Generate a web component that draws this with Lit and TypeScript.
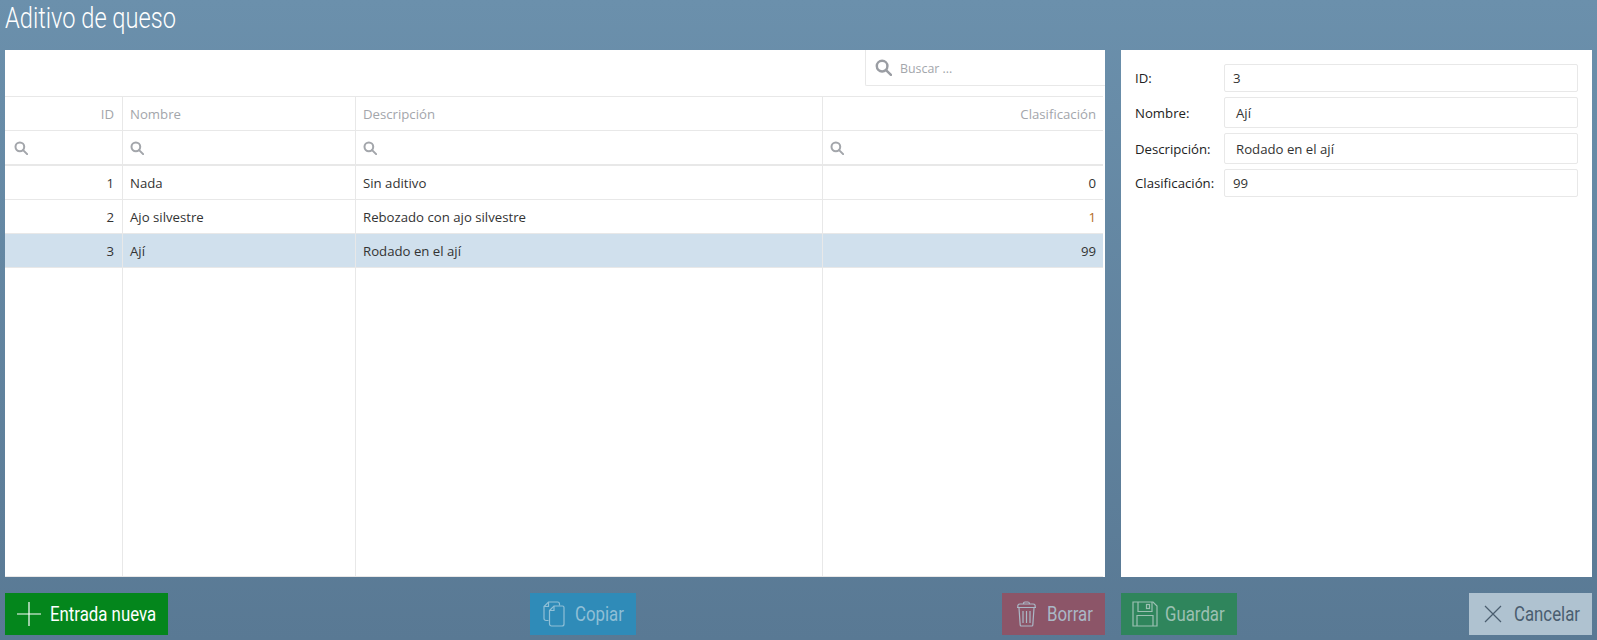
import { LitElement, html, css } from "lit";
import { customElement } from "lit/decorators.js";

const mag = (s: number) => html`<svg class="mag" width=${s} height=${s} viewBox="0 0 16 16" fill="none" stroke="currentColor" stroke-width="2.3"><circle cx="6.7" cy="6.7" r="5"/><path d="M10.400 10.400 15 15" stroke-linecap="round"/></svg>`;

const rows = [
  ["1", "Nada", "Sin aditivo", "0"],
  ["2", "Ajo silvestre", "Rebozado con ajo silvestre", "1"],
  ["3", "Ají", "Rodado en el ají", "99"],
];

@customElement("app-root")
export class AppRoot extends LitElement {
  static styles = css`
    :host { display: block; width: 1597px; height: 640px; overflow: hidden; background: linear-gradient(180deg, #6b90ac 0%, #597994 100%); font-family: "Open Sans", "Noto Sans", sans-serif; font-size: 13.2px; color: #333; }
    .page { display: flex; flex-direction: column; height: 640px; padding: 0 5px; box-sizing: border-box; }
    .title { height: 50px; flex: none; font-family: Roboto, sans-serif; font-weight: 300; font-size: 28.800px; line-height: 37px; color: #fff; transform: scaleX(.82); transform-origin: 0 0; white-space: nowrap; }
    .main { display: flex; gap: 16px; height: 527px; flex: none; }
    .left { width: 1100px; background: #fff; display: flex; flex-direction: column; flex: none; }
    .toolbar { height: 46px; flex: none; display: flex; justify-content: flex-end; align-items: flex-start; }
    .search { width: 240px; height: 36px; box-sizing: border-box; border: 1px solid #e8e8e8; border-top: none; border-right: none; display: flex; align-items: center; gap: 8px; padding-left: 9px; border-radius: 0 0 0 2px; }
    .search .mag { color: #9a9da3; }
    .search span { color: #a3a6ab; font-size: 12.400px; padding-top: 2px; }
    .grid { flex: 1; display: grid; grid-template-columns: 118px 233px 467px 280px; grid-template-rows: 34px 35px 34px 34px 34px 1fr; border-top: 1px solid #e8e8e8; border-bottom: 1px solid #e8e8e8; margin-right: 2px; }
    .cell { box-sizing: border-box; border-right: 1px solid #e8e8e8; border-bottom: 1px solid #e8e8e8; padding: 0 8px 0 7px; display: flex; align-items: center; white-space: nowrap; overflow: hidden; }
    .cell.last { border-right: none; }
    .num { justify-content: flex-end; }
    .cell.num.last { padding-right: 7px; }
    .head { color: #a3a6ab; }
    .filter { color: #a3a6ab; border-bottom-width: 2px; }
    .filter.first { padding-left: 9px; }
    .sel { background: #d0e0ed; border-bottom-color: #e8e8e8; }
    .orange { color: #b36b1d; }
    .blank { border-bottom: none; }
    .right { flex: 1; background: #fff; padding: 14px 14px 0 14px; box-sizing: border-box; display: grid; grid-template-columns: 89px 1fr; grid-template-rows: 28px 31px 31px 28px; row-gap: 5px; align-content: start; align-items: center; }
    .right .field { box-sizing: border-box; height: 100%; border: 1px solid #e8e8e8; border-radius: 2px; display: flex; align-items: center; padding-left: 8px; }
    .field.pad { padding-left: 11px; }
    .lab { color: #222; }
    .bottom { display: flex; margin-top: 16px; height: 42px; flex: none; }
    .btn { height: 42px; box-sizing: border-box; display: flex; align-items: center; font-family: Roboto, sans-serif; font-size: 20px; white-space: nowrap; }
    .btn svg { flex: none; }
    .btn b { font-weight: 400; display: inline-block; transform: scaleX(.84); transform-origin: 0 50%; }
    .bl { width: 1100px; display: flex; justify-content: space-between; flex: none; }
    .br { flex: 1; margin-left: 16px; display: flex; justify-content: space-between; }
    .new { width: 163px; background: #04861c; color: #fff; padding-left: 11px; gap: 8px; }
    .copy { width: 106px; margin-right: 4px; background: #2f8bb8; color: #8fbfd6; padding-left: 13px; gap: 10px; }
    .del { width: 103px; background: #8c5568; color: #aab8c6; padding-left: 14px; gap: 10px; }
    .save { width: 116px; background: #2f855c; color: #9cc0b2; padding-left: 11px; gap: 7px; }
    .cancel { width: 123px; background: #afc2d0; color: #4a5d6f; padding-left: 15px; gap: 12px; }
  `;

  render() {
    return html`<div class="page">
      <div class="title">Aditivo de queso</div>
      <div class="main">
        <div class="left">
          <div class="toolbar"><div class="search">${mag(17)}<span>Buscar ...</span></div></div>
          <div class="grid">
            <div class="cell head num">ID</div><div class="cell head">Nombre</div><div class="cell head">Descripción</div><div class="cell head num last">Clasificación</div>
            ${[0, 1, 2, 3].map((i) => html`<div class="cell filter ${i === 3 ? "last" : ""} ${i === 0 ? "first" : ""}">${mag(14)}</div>`)}
            ${rows.map((r, i) => {
              const s = i === 2 ? "sel" : "";
              return html`<div class="cell num ${s}">${r[0]}</div><div class="cell ${s}">${r[1]}</div><div class="cell ${s}">${r[2]}</div><div class="cell num last ${s} ${i === 1 ? "orange" : ""}">${r[3]}</div>`;
            })}
            <div class="cell blank"></div><div class="cell blank"></div><div class="cell blank"></div><div class="cell blank last"></div>
          </div>
        </div>
        <div class="right">
          <div class="lab">ID:</div><div class="field">3</div>
          <div class="lab">Nombre:</div><div class="field pad">Ají</div>
          <div class="lab">Descripción:</div><div class="field pad">Rodado en el ají</div>
          <div class="lab">Clasificación:</div><div class="field">99</div>
        </div>
      </div>
      <div class="bottom">
        <div class="bl">
          <div class="btn new"><svg width="26" height="26" viewBox="0 0 26 26" stroke="currentColor" stroke-width="1.2" fill="none"><path d="M13 1v24M1 13h24"/></svg><b>Entrada nueva</b></div>
          <div class="btn copy"><svg width="22" height="26" viewBox="0 0 22 26" fill="none" stroke="currentColor" stroke-width="1.2"><path d="M5.500 19.500H3c-1.200 0-2-.8-2-2V5.500L5.500 1H14.500c1.200 0 2 .8 2 2v1.500"/><path d="M5.500 1v4.500H1"/><path d="M6.500 9.500 11 5h8.500c1 0 1.500.6 1.500 1.500V23c0 1.200-.8 2-2 2H8.500c-1.200 0-2-.8-2-2z"/><path d="M11 5v4.500H6.500"/></svg><b>Copiar</b></div>
          <div class="btn del"><svg width="21" height="26" viewBox="0 0 21 26" fill="none" stroke="currentColor" stroke-width="1.2"><path d="M1 6.500h19M2 6.500c-.6-2 0-3.500 2-3.500h13c2 0 2.600 1.500 2 3.500"/><path d="M7.500 3c0-1.500.6-2 1.500-2h3c.9 0 1.500.5 1.500 2"/><path d="M3 7l1.200 17c0 .7.5 1 1 1h10.600c.5 0 1-.3 1-1L18 7"/><path d="M7 10v12M10.500 10v12M14 10v12"/></svg><b>Borrar</b></div>
        </div>
        <div class="br">
          <div class="btn save"><svg width="26" height="26" viewBox="0 0 26 26" fill="none" stroke="currentColor" stroke-width="1.2"><path d="M1 1h20l4 4v20H1z"/><path d="M6 1v9.500h14V1"/><path d="M5 25V14.500h16V25"/><rect x="14.500" y="3.500" width="3" height="4"/></svg><b>Guardar</b></div>
          <div class="btn cancel"><svg width="18" height="18" viewBox="0 0 18 18" fill="none" stroke="currentColor" stroke-width="1.2"><path d="M1 1l16 16M17 1 1 17"/></svg><b>Cancelar</b></div>
        </div>
      </div>
    </div>`;
  }
}
